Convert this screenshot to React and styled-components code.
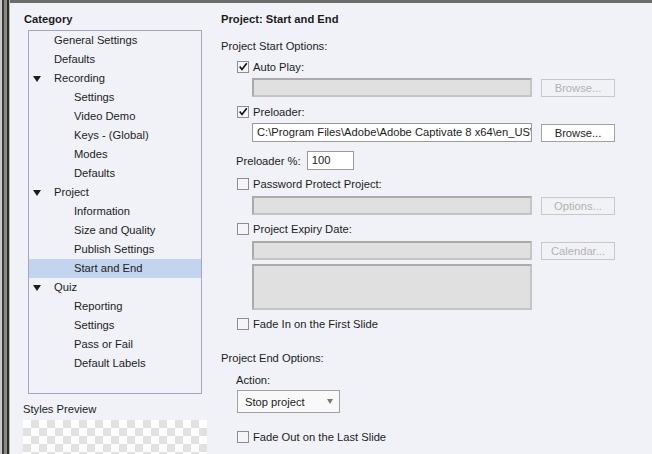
import React from 'react';
import styled, { createGlobalStyle } from 'styled-components';

const GlobalStyle = createGlobalStyle`
  html, body {
    margin: 0;
    padding: 0;
    background: #f0f2f7;
  }
  body {
    font-family: "Liberation Sans", Arial, sans-serif;
    font-size: 11.2px;
    color: #1c1c1c;
  }
`

const Frame = styled.div`
  display: flex;
  width: 652px;
  height: 454px;
  overflow: hidden;
  background: #f0f2f7;
`

const EdgeStrip = styled.div`
  width: 10px;
  flex: none;
  background: linear-gradient(to right, #c9c9c9 0, #c9c9c9 2px, #3c3a38 2px, #3c3a38 4px,
    #8c8884 4px, #8c8884 7px, #2e2c2a 7px, #2e2c2a 9px, #b8b8b8 9px);
`

const Body = styled.div`
  flex: 1;
  display: flex;
  border-top: 3px solid #6c6c6c;
`

const Sidebar = styled.div`
  width: 200px;
  flex: none;
  display: flex;
  flex-direction: column;
  padding: 9px 0 0 14px;
  box-sizing: border-box;
`

const BoldHeading = styled.div`
  font-weight: bold;
  line-height: 14px;
`

const Tree = styled.div`
  margin: 4px 0 0 4px;
  width: 174px;
  height: 364px;
  box-sizing: border-box;
  border: 1px solid #a4a6bf;
  display: flex;
  flex-direction: column;
`

const TreeRow = styled.div`
  height: 19px;
  line-height: 19px;
  display: flex;
  align-items: center;
  padding-left: ${p => (p.$level === 1 ? 45 : 25)}px;
  position: relative;
  background: ${p => (p.$selected ? '#c2d4ee' : 'transparent')};
  white-space: nowrap;
`

const Caret = styled.span`
  position: absolute;
  left: 4px;
  top: 7px;
  width: 0;
  height: 0;
  border-left: 4px solid transparent;
  border-right: 4px solid transparent;
  border-top: 6px solid #1c1c1c;
`

const PreviewLabel = styled.div`
  margin: 8px 0 0 -1px;
  line-height: 14px;
`

const Checker = styled.div`
  margin: 4px 0 0 -1px;
  width: 184px;
  flex: 1;
  background-color: #ffffff;
  background-image:
    linear-gradient(45deg, #e2e2e2 25%, transparent 25%, transparent 75%, #e2e2e2 75%),
    linear-gradient(45deg, #e2e2e2 25%, transparent 25%, transparent 75%, #e2e2e2 75%);
  background-size: 16px 16px;
  background-position: 0 0, 8px 8px;
`

const Main = styled.div`
  flex: 1;
  padding: 9px 0 0 11px;
  display: flex;
  flex-direction: column;
`

const SectionLabel = styled.div`
  line-height: 14px;
  margin: ${p => p.$mt || 0}px 0 0 ${p => p.$indent || 0}px;
`

const CheckRow = styled.label`
  display: flex;
  align-items: center;
  gap: 4px;
  height: 14px;
  margin: ${p => p.$mt || 0}px 0 0 16px;
  line-height: 14px;
`

const Box = styled.span`
  width: 12px;
  height: 12px;
  box-sizing: border-box;
  border: 1px solid #8c8e94;
  background: #f4f5f8;
  display: flex;
  align-items: center;
  justify-content: center;
  flex: none;
`

const FieldRow = styled.div`
  display: flex;
  align-items: center;
  gap: 9px;
  margin: ${p => p.$mt || 0}px 0 0 31px;
`

const TextField = styled.div`
  width: 280px;
  height: ${p => p.$h || 19}px;
  box-sizing: border-box;
  border: ${p => (p.$disabled ? '2px solid #aaaaaa' : '1px solid #9a9a9a')};
  border-right-color: ${p => (p.$disabled ? '#c4c4c4' : '#9a9a9a')};
  border-bottom-color: ${p => (p.$disabled ? '#c4c4c4' : '#9a9a9a')};
  background: ${p => (p.$disabled ? '#e0e0e0' : '#ffffff')};
  padding: 0 4px;
  line-height: 17px;
  white-space: nowrap;
  overflow: hidden;
  text-overflow: clip;
`

const Button = styled.div`
  width: 74px;
  height: 18px;
  box-sizing: border-box;
  border: 1px solid ${p => (p.$disabled ? '#c8c8c8' : '#a2a2a2')};
  background: ${p => (p.$disabled ? '#f1f2f5' : '#ffffff')};
  color: ${p => (p.$disabled ? '#b2b2b2' : '#1c1c1c')};
  text-align: center;
  line-height: 16px;
`

const InlineRow = styled.div`
  display: flex;
  align-items: center;
  gap: 6px;
  margin: ${p => p.$mt || 0}px 0 0 15px;
`

const SmallInput = styled.div`
  width: 47px;
  height: 19px;
  box-sizing: border-box;
  border: 1px solid #9a9a9a;
  background: #ffffff;
  padding: 0 4px;
  line-height: 17px;
`

const Select = styled.div`
  margin: ${p => p.$mt || 0}px 0 0 16px;
  width: 103px;
  height: 23px;
  box-sizing: border-box;
  border: 1px solid #a0a0a0;
  background: #f9f9fa;
  display: flex;
  align-items: center;
  justify-content: space-between;
  padding: 0 6px 0 7px;
`

const SelectArrow = styled.span`
  width: 0;
  height: 0;
  border-left: 3.5px solid transparent;
  border-right: 3.5px solid transparent;
  border-top: 5px solid #777777;
`

const Check = () => (
  <svg width="12" height="12" viewBox="0 0 12 12">
    <path d="M2 5.5 L4.8 9 L10.5 1.5" fill="none" stroke="#111" strokeWidth="2" />
  </svg>
)

const Checkbox = ({ checked, label, mt }) => (
  <CheckRow $mt={mt}>
    <Box>{checked && <Check />}</Box>
    {label}
  </CheckRow>
)

const tree = [
  { label: 'General Settings' },
  { label: 'Defaults' },
  { label: 'Recording', group: true },
  { label: 'Settings', level: 1 },
  { label: 'Video Demo', level: 1 },
  { label: 'Keys - (Global)', level: 1 },
  { label: 'Modes', level: 1 },
  { label: 'Defaults', level: 1 },
  { label: 'Project', group: true },
  { label: 'Information', level: 1 },
  { label: 'Size and Quality', level: 1 },
  { label: 'Publish Settings', level: 1 },
  { label: 'Start and End', level: 1, selected: true },
  { label: 'Quiz', group: true },
  { label: 'Reporting', level: 1 },
  { label: 'Settings', level: 1 },
  { label: 'Pass or Fail', level: 1 },
  { label: 'Default Labels', level: 1 },
];

export default function App() {
  return (
    <Frame>
      <GlobalStyle />
      <EdgeStrip />
      <Body>
        <Sidebar>
          <BoldHeading>Category</BoldHeading>
          <Tree>
            {tree.map((item, i) => (
              <TreeRow key={i} $level={item.level} $selected={item.selected}>
                {item.group && <Caret />}
                {item.label}
              </TreeRow>
            ))}
          </Tree>
          <PreviewLabel>Styles Preview</PreviewLabel>
          <Checker />
        </Sidebar>
        <Main>
          <BoldHeading>Project: Start and End</BoldHeading>
          <SectionLabel $mt={13}>Project Start Options:</SectionLabel>
          <Checkbox checked label="Auto Play:" mt={7} />
          <FieldRow $mt={4}>
            <TextField $disabled />
            <Button $disabled>Browse...</Button>
          </FieldRow>
          <Checkbox checked label="Preloader:" mt={8} />
          <FieldRow $mt={4}>
            <TextField>C:\Program Files\Adobe\Adobe Captivate 8 x64\en_US\G</TextField>
            <Button>Browse...</Button>
          </FieldRow>
          <InlineRow $mt={9}>
            Preloader %:
            <SmallInput>100</SmallInput>
          </InlineRow>
          <Checkbox label="Password Protect Project:" mt={7} />
          <FieldRow $mt={5}>
            <TextField $disabled />
            <Button $disabled>Options...</Button>
          </FieldRow>
          <Checkbox label="Project Expiry Date:" mt={7} />
          <FieldRow $mt={5}>
            <TextField $disabled />
            <Button $disabled>Calendar...</Button>
          </FieldRow>
          <FieldRow $mt={4}>
            <TextField $disabled $h={46} />
          </FieldRow>
          <Checkbox label="Fade In on the First Slide" mt={7} />
          <SectionLabel $mt={20}>Project End Options:</SectionLabel>
          <SectionLabel $indent={15} $mt={8}>Action:</SectionLabel>
          <Select $mt={3}>
            Stop project
            <SelectArrow />
          </Select>
          <Checkbox label="Fade Out on the Last Slide" mt={17} />
        </Main>
      </Body>
    </Frame>
  );
}
